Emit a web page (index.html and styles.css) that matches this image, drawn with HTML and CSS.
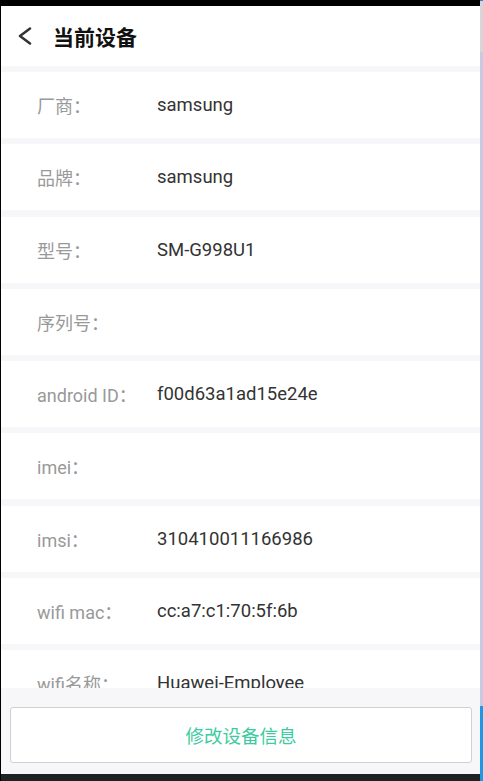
FILE: index.html
```html
<!DOCTYPE html>
<html lang="zh-CN">
<head>
    <meta charset="UTF-8">
    <meta name="viewport" content="width=device-width, initial-scale=1.0">
    <title>当前设备</title>
    <link rel="stylesheet" href="styles.css">
</head>
<body>
    <div class="frame">
        <div class="screen">
            <div class="statusBar"></div>
            <header class="topBar">
                <svg class="backIcon" width="16" height="18" viewBox="0 0 16 18">
                    <path d="M13 1.5 L3 9 L13 16.5" fill="none" stroke="#333" stroke-width="2.5" stroke-linecap="round" stroke-linejoin="round"/>
                </svg>
                <h1>当前设备</h1>
            </header>

            <!-- Device info list -->
            <main class="infoList">
                <div class="infoRow"><span class="label">厂商：</span><span class="value">samsung</span></div>
                <div class="infoRow"><span class="label">品牌：</span><span class="value">samsung</span></div>
                <div class="infoRow"><span class="label">型号：</span><span class="value">SM-G998U1</span></div>
                <div class="infoRow"><span class="label">序列号：</span><span class="value"></span></div>
                <div class="infoRow"><span class="label">android ID：</span><span class="value">f00d63a1ad15e24e</span></div>
                <div class="infoRow"><span class="label">imei：</span><span class="value"></span></div>
                <div class="infoRow"><span class="label">imsi：</span><span class="value">310410011166986</span></div>
                <div class="infoRow"><span class="label">wifi mac：</span><span class="value">cc:a7:c1:70:5f:6b</span></div>
                <div class="infoRow"><span class="label">wifi名称：</span><span class="value">Huawei-Employee</span></div>
            </main>

            <footer class="actionBar">
                <button class="editButton">修改设备信息</button>
            </footer>
            <div class="navBar"></div>
        </div>
        <div class="scrollStrip"></div>
    </div>
</body>
</html>
```

FILE: styles.css
```css
/* General Styles */
body {
    margin: 0;
    padding: 0;
    font-family: Roboto, "Noto Sans CJK SC", sans-serif;
    background: #fff;
}

.frame {
    display: flex;
    width: 483px;
    height: 781px;
    overflow: hidden;
}

.screen {
    width: 479px;
    border-left: 1px solid #000;
    display: flex;
    flex-direction: column;
    background: #fff;
}

.statusBar {
    height: 6px;
    background: #000;
}

.topBar {
    height: 60px;
    display: flex;
    align-items: center;
    padding-left: 16px;
    background: #fff;
}

.backIcon {
    display: block;
    margin-right: 20px;
}

.topBar h1 {
    margin: 0;
    font-size: 21px;
    font-weight: bold;
    color: #111;
    font-family: "Noto Sans CJK SC", sans-serif;
}

/* Info rows */
.infoList {
    height: 622px;
    overflow: hidden;
    background: #f7f7f9;
    display: flex;
    flex-direction: column;
    gap: 6.3px;
    padding-top: 6px;
    box-sizing: border-box;
}

.infoRow {
    flex: 0 0 66px;
    display: flex;
    align-items: center;
    background: #fff;
    font-size: 18.5px;
}

.label {
    width: 120px;
    padding-left: 36px;
    flex-shrink: 0;
    color: #999;
    font-size: 18px;
}

.value {
    color: #333;
}

/* Bottom action */
.actionBar {
    height: 86px;
    background: #f7f7f9;
    padding: 19px 8px 0 9px;
    box-sizing: border-box;
}

.editButton {
    width: 100%;
    height: 56px;
    background: #fff;
    border: 1px solid #d0d0d0;
    border-radius: 3px;
    color: #3dcba0;
    font-size: 18.5px;
    font-family: "Noto Sans CJK SC", sans-serif;
}

.navBar {
    height: 7px;
    background: #202124;
}

.scrollStrip {
    width: 3px;
    background: linear-gradient(to bottom, #2f7cf0 0, #2f7cf0 1px, #d6d6d6 1px, #d6d6d6 52px, #c6cbe2 52px, #c6cbe2 706px, #1a9ae6 706px);
}
```
